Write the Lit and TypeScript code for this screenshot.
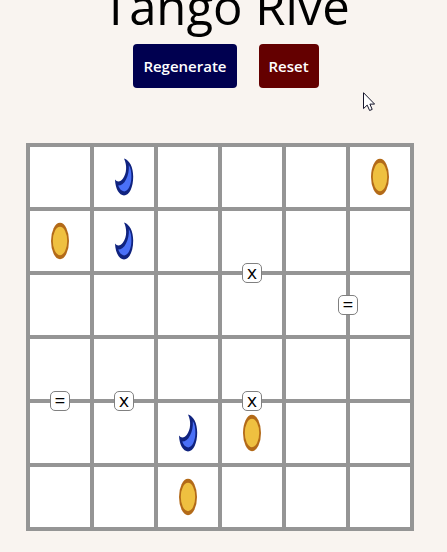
import { LitElement, html, css, nothing } from "lit";
import { customElement, property } from "lit/decorators.js";

type Piece = "sun" | "moon" | "";
type Sign = "=" | "x";
interface Link {
  sign: Sign;
  side: "right" | "bottom";
}

const SIZE = 6;

const PIECES: Record<string, Piece> = {
  "0,1": "moon",
  "0,5": "sun",
  "1,0": "sun",
  "1,1": "moon",
  "4,2": "moon",
  "4,3": "sun",
  "5,2": "sun",
};

const LINKS: Record<string, Link> = {
  "1,3": { sign: "x", side: "bottom" },
  "2,4": { sign: "=", side: "right" },
  "3,0": { sign: "=", side: "bottom" },
  "3,1": { sign: "x", side: "bottom" },
  "3,3": { sign: "x", side: "bottom" },
};

const sun = html`<svg viewBox="0 0 18 36" aria-hidden="true">
  <ellipse cx="9" cy="18" rx="9" ry="18.2" fill="#b36a18" />
  <ellipse cx="9" cy="18" rx="7.2" ry="14.2" fill="#efc040" />
</svg>`;

const moon = html`<svg viewBox="0 0 18 36" aria-hidden="true">
  <path
    fill="#10237f"
    d="M9 -0.6C14.5 1 18.2 8 18.2 17.5C18.2 28 14.5 36.4 9 36.4C4.2 36.4 0.4 30 0 20.6C2.2 23.6 5.6 23 8 19.5C11.6 14.5 12.4 6.5 9 -0.6Z"
  />
  <path
    fill="#4a70f7"
    d="M13.8 6C15.8 9 16.5 13 16.4 18C16.3 26 13 32.4 9.2 32.4C6.6 32.4 4.4 30 3.2 26.6C6.4 26.6 9 24.6 11 20.6C13.2 16.4 14.2 11.4 13.8 6Z"
  />
</svg>`;

@customElement("tango-cell")
export class TangoCell extends LitElement {
  @property() piece: Piece = "";
  @property() name = "";
  @property({ attribute: false }) link?: Link;

  static styles = css`
    :host {
      display: block;
      position: relative;
      aspect-ratio: 1;
    }
    .cell {
      display: flex;
      align-items: center;
      justify-content: center;
      box-sizing: border-box;
      width: 100%;
      height: 100%;
      padding: 0;
      border: 0;
      background: #ffffff;
      cursor: pointer;
    }
    svg {
      display: block;
      width: 18px;
      height: 36px;
      overflow: visible;
    }
    .link {
      position: absolute;
      z-index: 1;
      box-sizing: border-box;
      width: 20px;
      height: 20px;
      border: 1px solid #808080;
      border-radius: 5px;
      background: #ffffff;
      color: #000000;
      font: 19px/16px "Open Sans", "Noto Sans", sans-serif;
      text-align: center;
      transform: translate(-50%, -50%);
    }
    .bottom {
      left: 50%;
      top: calc(100% + 2px);
    }
    .right {
      left: calc(100% + 2px);
      top: 50%;
    }
  `;

  render() {
    return html`<button class="cell" type="button" aria-label=${this.name}>
        ${this.piece === "sun" ? sun : this.piece === "moon" ? moon : nothing}
      </button>
      ${this.link
        ? html`<span class="link ${this.link.side}">${this.link.sign}</span>`
        : nothing}`;
  }
}

@customElement("app-root")
export class AppRoot extends LitElement {
  static styles = css`
    :host {
      display: block;
      box-sizing: border-box;
      min-height: 100vh;
      overflow: hidden;
      background: #f9f4f0;
      color: #000000;
      font-family: "Open Sans", "Noto Sans", sans-serif;
    }
    .top {
      position: relative;
      padding-left: 5px;
    }
    .title {
      margin: -28px 0 0;
      padding-bottom: 4px;
      font-size: 49px;
      font-weight: 400;
      line-height: 68px;
      text-align: center;
      white-space: nowrap;
    }
    .actions {
      display: flex;
      justify-content: center;
      gap: 22px;
    }
    .action {
      height: 44px;
      padding: 0 10px;
      border: 0;
      border-radius: 4px;
      color: #ffffff;
      font: 600 15px/20px "Open Sans", "Noto Sans", sans-serif;
      cursor: pointer;
    }
    .regenerate {
      background: #000050;
    }
    .reset {
      background: #640000;
    }
    .pointer {
      position: absolute;
      right: 72px;
      bottom: -24px;
      width: 12px;
      height: 20px;
    }
    .stage {
      padding: 55px 33px 21px 26px;
    }
    .board {
      display: grid;
      grid-template-columns: repeat(6, 1fr);
      gap: 4px;
      max-width: 380px;
      margin: 0 auto;
      padding: 4px;
      background: #959595;
    }
  `;

  render() {
    const cells = Array.from({ length: SIZE * SIZE }, (_, i) => {
      const row = Math.floor(i / SIZE);
      const col = i % SIZE;
      const key = `${row},${col}`;
      return html`<tango-cell
        .piece=${PIECES[key] ?? ""}
        .name=${`Row ${row + 1}, column ${col + 1}`}
        .link=${LINKS[key]}
      ></tango-cell>`;
    });
    return html`
      <header class="top">
        <h1 class="title">Tango Rive</h1>
        <div class="actions">
          <button class="action regenerate" type="button">Regenerate</button>
          <button class="action reset" type="button">Reset</button>
        </div>
        <svg class="pointer" viewBox="0 0 12 20" aria-hidden="true">
          <path
            d="M0.5 0.7V16.6L4.2 13.1L6.6 18.5L9.2 17.4L6.9 12.1H11.6Z"
            fill="#ffffff"
            stroke="#14142a"
          />
        </svg>
      </header>
      <main class="stage">
        <div class="board">${cells}</div>
      </main>
    `;
  }
}
